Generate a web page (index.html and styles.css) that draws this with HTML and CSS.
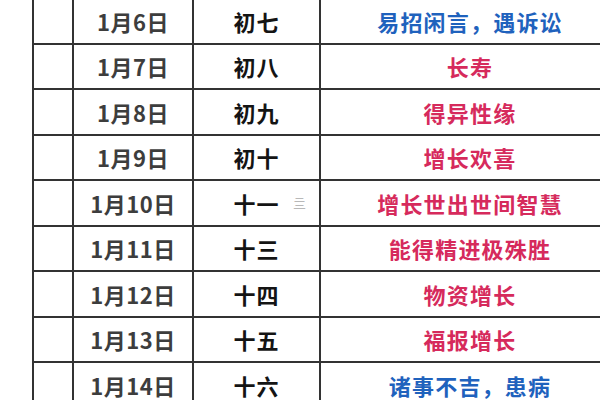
FILE: index.html
```html
<!DOCTYPE html>
<html lang="zh">
<head>
<meta charset="utf-8">
<link rel="stylesheet" href="styles.css">
</head>
<body>
<div class="table">
  <div class="row"><div class="c c1"></div><div class="c c2">1月6日</div><div class="c c3">初七</div><div class="c c4 blue">易招闲言，遇诉讼</div></div>
  <div class="row"><div class="c c1"></div><div class="c c2">1月7日</div><div class="c c3">初八</div><div class="c c4 pink">长寿</div></div>
  <div class="row"><div class="c c1"></div><div class="c c2">1月8日</div><div class="c c3">初九</div><div class="c c4 pink">得异性缘</div></div>
  <div class="row"><div class="c c1"></div><div class="c c2">1月9日</div><div class="c c3">初十</div><div class="c c4 pink">增长欢喜</div></div>
  <div class="row"><div class="c c1"></div><div class="c c2">1月10日</div><div class="c c3 mark-cell">十一<span class="mark">亖</span></div><div class="c c4 pink">增长世出世间智慧</div></div>
  <div class="row"><div class="c c1"></div><div class="c c2">1月11日</div><div class="c c3">十三</div><div class="c c4 pink">能得精进极殊胜</div></div>
  <div class="row"><div class="c c1"></div><div class="c c2">1月12日</div><div class="c c3">十四</div><div class="c c4 pink">物资增长</div></div>
  <div class="row"><div class="c c1"></div><div class="c c2">1月13日</div><div class="c c3">十五</div><div class="c c4 pink">福报增长</div></div>
  <div class="row"><div class="c c1"></div><div class="c c2">1月14日</div><div class="c c3">十六</div><div class="c c4 blue">诸事不吉，患病</div></div>
</div>
</body>
</html>
```
FILE: styles.css
```css
html, body {
  margin: 0;
  padding: 0;
  background: #ffffff;
  width: 600px;
  height: 400px;
  overflow: hidden;
}
.table {
  margin-top: -1px;
  margin-left: 32px;
  display: flex;
  flex-direction: column;
  font-family: "Noto Sans CJK SC", "Noto Sans", sans-serif;
  font-weight: 700;
  font-size: 22px;
}
.row {
  display: grid;
  grid-template-columns: 40px 120px 127px 300px;
  height: 45.5px;
  box-sizing: border-box;
  border-bottom: 2px solid #333333;
}
.c {
  border-left: 2px solid #333333;
  display: flex;
  align-items: center;
  justify-content: center;
  line-height: 1;
  white-space: nowrap;
}
.c2 {
  color: #3d3d3d;
  letter-spacing: 0.5px;
}
.c3 {
  color: #141414;
  letter-spacing: 1px;
}
.c4 {
  letter-spacing: 1.2px;
}
.blue { color: #1f62bd; }
.pink { color: #d62a5c; }
.mark-cell { position: relative; }
.mark {
  position: absolute;
  left: 99px;
  top: 15px;
  font-size: 13px;
  font-weight: 400;
  color: #b8b8b8;
  letter-spacing: 0;
}
```
